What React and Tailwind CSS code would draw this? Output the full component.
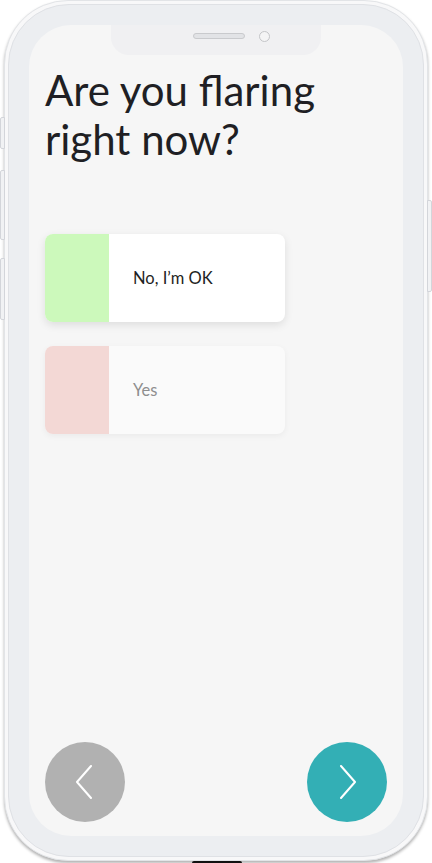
const ChevronLeft = () => (
  <svg width="18" height="34" viewBox="0 0 18 34" fill="none">
    <path d="M16 1 L2 17 L16 33" stroke="white" strokeWidth="2" strokeLinecap="round" strokeLinejoin="round" />
  </svg>
);

const ChevronRight = () => (
  <svg width="18" height="34" viewBox="0 0 18 34" fill="none">
    <path d="M2 1 L16 17 L2 33" stroke="white" strokeWidth="2" strokeLinecap="round" strokeLinejoin="round" />
  </svg>
);

function Option({ label, strip, body, text, shadow }) {
  return (
    <button className={`flex h-[88px] w-[240px] overflow-hidden rounded-[8px] text-left ${body} ${shadow}`}>
      <div className={`h-full w-[64px] ${strip}`} />
      <div className={`flex items-center pl-6 text-[16.5px] ${text}`}>{label}</div>
    </button>
  );
}

export default function App() {
  return (
    <div className="relative h-[863px] w-[432px] overflow-hidden bg-white" style={{ fontFamily: "Lato, 'Open Sans', sans-serif" }}>
      {/* side buttons */}
      <div className="absolute left-0 top-[117px] h-[32px] w-[5px] rounded-l-[2px] border border-[#d3d5da] bg-[#f1f2f4]" />
      <div className="absolute left-0 top-[170px] h-[70px] w-[5px] rounded-l-[2px] border border-[#d3d5da] bg-[#f1f2f4]" />
      <div className="absolute left-0 top-[258px] h-[62px] w-[5px] rounded-l-[2px] border border-[#d3d5da] bg-[#f1f2f4]" />
      <div className="absolute right-0 top-[200px] h-[92px] w-[5px] rounded-r-[2px] border border-[#d3d5da] bg-[#f1f2f4]" />
      <div className="absolute bottom-0 left-[192px] h-[2px] w-[50px] rounded-t-full bg-[#111]" />

      {/* phone body */}
      <div className="ml-[4px] h-[861px] w-[424px] rounded-[64px] border border-[#e2e4e7] bg-[#f8f8f9] p-[3px] shadow-[0_2px_3px_rgba(0,0,0,0.3)]">
        <div className="h-full w-full rounded-[61px] border border-[#dfe1e5] bg-[#eceef1] px-[20px] pb-[20px] pt-[20px]">
          <div className="relative flex h-full w-full flex-col rounded-[42px] bg-[#f6f6f6] px-4 pb-[14px]">
            {/* notch */}
            <div className="absolute left-[82px] top-0 flex h-[30px] w-[210px] items-center justify-center gap-[14px] rounded-b-[18px] bg-[#f0f0f2] pb-[8px]">
              <div className="ml-[30px] h-[6px] w-[52px] rounded-full border border-[#c9cacd] bg-[#e2e3e6]" />
              <div className="h-[11px] w-[11px] rounded-full border border-[#c4c5c8] bg-[#f4f4f5]" />
            </div>

            <h1 className="mt-[41px] text-[42px] leading-[49px] text-[#1f1f24]">
              Are you flaring
              <br />
              right now?
            </h1>

            <div className="mt-[70px] flex flex-col gap-6">
              <Option
                label="No, I’m OK"
                strip="bg-[#ccf9bb]"
                body="bg-white"
                text="text-[#1f1f24]"
                shadow="shadow-[0_3px_8px_rgba(0,0,0,0.1)]"
              />
              <Option
                label="Yes"
                strip="bg-[#f3d8d5]"
                body="bg-[#fafafa]"
                text="text-[#8e8e8e]"
                shadow="shadow-[0_2px_6px_rgba(0,0,0,0.05)]"
              />
            </div>

            <div className="mt-auto flex items-center justify-between">
              <button className="flex h-[80px] w-[80px] items-center justify-center rounded-full bg-[#b1b1b1] pr-[2px]">
                <ChevronLeft />
              </button>
              <button className="flex h-[80px] w-[80px] items-center justify-center rounded-full bg-[#33afb5] pl-[2px]">
                <ChevronRight />
              </button>
            </div>
          </div>
        </div>
      </div>
    </div>
  );
}
